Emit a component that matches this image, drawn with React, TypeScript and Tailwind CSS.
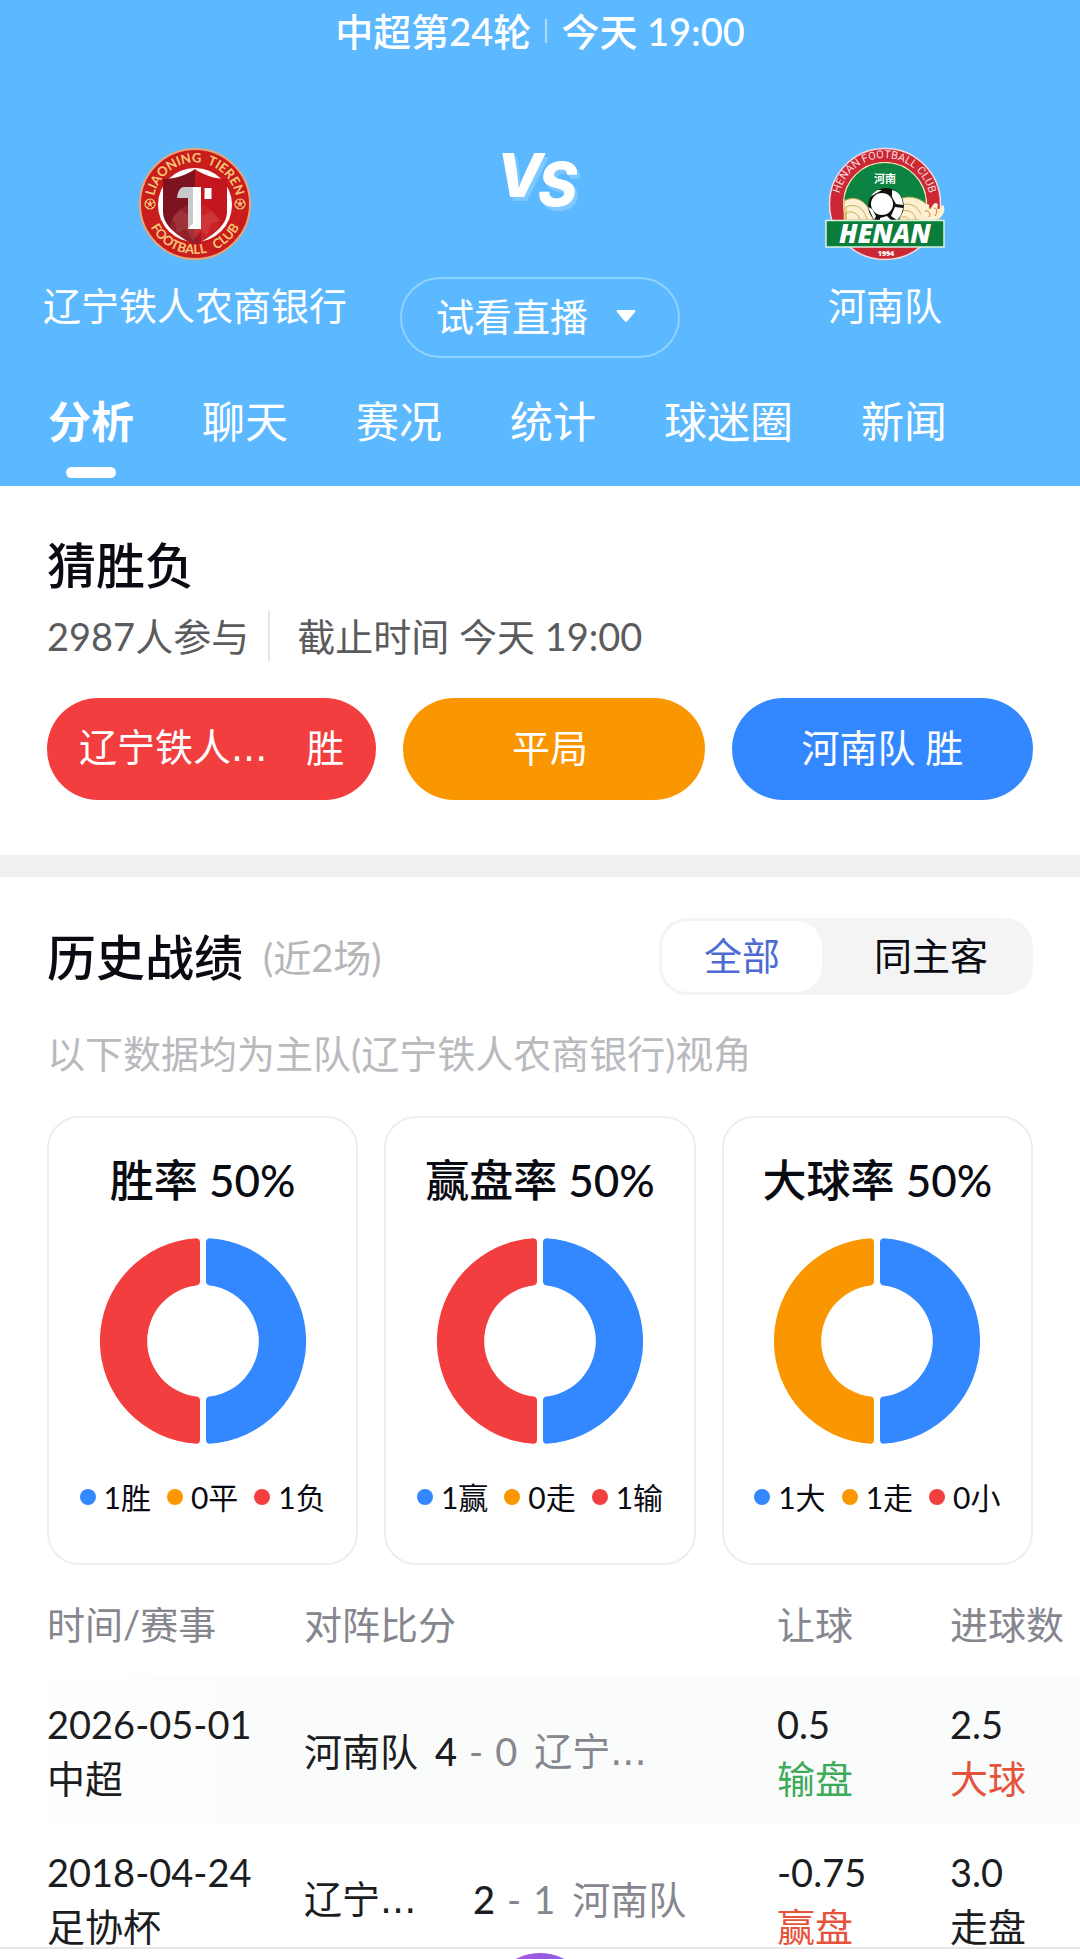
import React, { useState } from "react";

const BLUE = "#3388ff";
const ORANGE = "#fa9600";
const RED = "#f23e3f";

function MiniBall({ x, y }: { x: number; y: number }) {
  return (
    <g transform={`translate(${x} ${y})`}>
      <circle r="5" fill="none" stroke="#f3c57c" strokeWidth="1.2" />
      <circle r="2" fill="#f3c57c" />
      <path d="M0-2V-5M2-1 4.600-2M1.200 2 3 4M-1.200 2-3 4M-2-1-4.600-2" stroke="#f3c57c" strokeWidth="1" />
    </g>
  );
}

function LiaoningCrest() {
  return (
    <svg viewBox="0 0 112 112" className="size-28" role="img" aria-label="辽宁铁人队徽">
      <defs>
        <path id="ln-top" d="M14.500 56a41.500 41.500 0 0 1 83 0" />
        <path id="ln-bottom" d="M6 56a50 50 0 0 0 100 0" />
        <clipPath id="ln-shield">
          <path d="M56 21c8 6 20 10 32 10v33c0 14-16 25-32 33-16-8-32-19-32-33V31c12 0 24-4 32-10Z" />
        </clipPath>
      </defs>
      <circle cx="56" cy="56" r="55" fill="#c91c1d" stroke="#eba575" strokeWidth="2" />
      <circle cx="56" cy="57" r="37" fill="#fff" />
      <g clipPath="url(#ln-shield)">
        <path d="M20 15h36v90H20z" fill="#7d1320" />
        <path d="M56 15h36v90H56z" fill="#c3161f" />
        <circle cx="56" cy="81" r="25" fill="#e25a55" opacity=".2" />
        <path d="M33 70l9-8 7 5 7-6 9 7 7-5 10 10-9 2-5 12-8-6-6 12-7-12-9 4-2-9Z" fill="#f0a09a" opacity=".14" />
        <path d="M56 90 62 84V97H56Z" fill="#7d1320" opacity=".6" />
      </g>
      <path d="M45 39h11v42h-7V50H38c1-7 3-11 7-11Z" fill="#c9c9cd" />
      <path d="M54 39h8v42H49l5-6Z" fill="#fff" />
      <path d="M65.500 40h7v11h-7Z" fill="#fff" />
      <MiniBall x={11} y={56} />
      <MiniBall x={101} y={56} />
      <text fill="#f6c876" fontSize="13" fontWeight="700" className="font-['Lato']">
        <textPath href="#ln-top" startOffset="50%" textAnchor="middle">LIAONING&#160;&#160;TIEREN</textPath>
      </text>
      <text fill="#f6c876" fontSize="13" fontWeight="700" className="font-['Lato']">
        <textPath href="#ln-bottom" startOffset="50%" textAnchor="middle">FOOTBALL&#160;&#160;&#160;CLUB</textPath>
      </text>
    </svg>
  );
}

function HenanCrest() {
  return (
    <svg viewBox="0 0 122 114" className="h-[114px] w-[122px]" role="img" aria-label="河南队徽">
      <defs>
        <path id="hn-top" d="M14.500 57a46 46 0 0 1 92 0" />
        <clipPath id="hn-inner"><path d="M19 15h84v58H19z" /></clipPath>
        <clipPath id="hn-ball"><circle cx="62" cy="59" r="18" /></clipPath>
      </defs>
      <circle cx="61" cy="57" r="55.500" fill="#cb2735" stroke="#f7d9da" strokeWidth="1.500" />
      <g clipPath="url(#hn-inner)">
        <circle cx="61" cy="57" r="41.500" fill="#0c8340" stroke="#f6edc0" strokeWidth="1.200" />
      </g>
      <g fill="#fbf0cf" stroke="#c9a85a" strokeWidth="1">
        <path d="M20 73V54c10-6 24-2 29 19Z" />
        <path d="M76 73V52c12-5 25 1 30 10l-2 11Z" />
        <path d="M22 73V60c9-4 18 0 21 13M22 73v-7c6-3 12 0 14 7M78 58c9-3 18 2 21 15M78 64c7-2 13 2 14 9M78 70c4-1 6 1 7 3" fill="none" />
        <path d="M97 73c0-9 1-15 6-16 4 0 1 4 2 5 2 2 3-6 7-6 4 1 0 5 2 6 3 1 3-6 6-3 2 7-4 14-9 14Z" stroke="none" />
        <path d="M101 64c4-1 6 3 4 6M110 61c4 0 3 5 1 8" fill="none" stroke="#e2762e" />
      </g>
      <g clipPath="url(#hn-ball)">
        <circle cx="62" cy="59" r="18" fill="#111" />
        <circle cx="58" cy="57" r="11" fill="#fff" />
        <path d="M68 43c7 1 11 8 11 15l-7-1-4-7ZM71 60l8 1c-1 6-3 9-6 12l-6-4ZM46 50l5-7 7 0-7 4ZM44 60l4 2 4 7-2 4ZM56 71l7-2 5 5-12 2Z" fill="#fff" />
      </g>
      <path d="M2 73.500h118V100H2z" fill="#0a7d3a" stroke="#d8f3e2" strokeWidth="1.500" />
      <text x="61" y="96" textAnchor="middle" fill="#fff" fontSize="26" fontWeight="800" fontStyle="italic" className="font-['Open_Sans']">HENAN</text>
      <text x="62" y="109" textAnchor="middle" fill="#fff" fontSize="7" fontWeight="800" className="font-['Open_Sans']">1994</text>
      <text x="61" y="36" textAnchor="middle" fill="#fff" fontSize="11" fontWeight="700" className="font-['Noto_Sans_CJK_SC']">河南</text>
      <text fill="#f8dcdc" fontSize="11" className="font-['Roboto']">
        <textPath href="#hn-top" startOffset="50%" textAnchor="middle">HENAN FOOTBALL CLUB</textPath>
      </text>
    </svg>
  );
}

function Versus() {
  return (
    <svg viewBox="0 0 120 80" className="h-20 w-[120px] drop-shadow-[3px_4px_0_#7cc8ff]" role="img" aria-label="VS">
      <text x="57" y="50" textAnchor="middle" fontSize="60" fontStyle="italic" fontWeight="800" fill="#fff" className="font-['Inter']">
        V<tspan dx="-5" dy="9">S</tspan>
      </text>
    </svg>
  );
}

function Donut({ left }: { left: string }) {
  const half = "M6 4A4 4 0 0 1 9.500 .2A103 103 0 0 1 9.500 205.800A4 4 0 0 1 6 202V162A4 4 0 0 1 9.500 158.600A56 56 0 0 0 9.500 47.400A4 4 0 0 1 6 44Z";
  return (
    <svg viewBox="0 0 206 206" className="size-[206px]" aria-hidden="true">
      <path d={half} transform="translate(100 0)" fill={BLUE} />
      <path d={half} transform="translate(106 0) scale(-1 1)" fill={left} />
    </svg>
  );
}

function TeamName({ name, cut }: { name: string; cut?: boolean }) {
  return (
    <span>
      {name}
      {cut && <span className="font-['DejaVu_Sans']">...</span>}
    </span>
  );
}

type Stat = { title: string; left: string; legend: string[] };
const stats: Stat[] = [
  { title: "胜率 50%", left: RED, legend: ["1胜", "0平", "1负"] },
  { title: "赢盘率 50%", left: RED, legend: ["1赢", "0走", "1输"] },
  { title: "大球率 50%", left: ORANGE, legend: ["1大", "1走", "0小"] },
];
const dotColors = [BLUE, ORANGE, RED];

const tabs = ["分析", "聊天", "赛况", "统计", "球迷圈", "新闻"];

type Match = {
  date: string; cup: string; home: string; homeCut?: boolean; hs: string; as: string; away: string; awayCut?: boolean;
  handicap: string; hr: string; hrClass: string; goals: string; gr: string; grClass: string;
};
const matches: Match[] = [
  { date: "2026-05-01", cup: "中超", home: "河南队", hs: "4", as: "0", away: "辽宁", awayCut: true, handicap: "0.5", hr: "输盘", hrClass: "text-[#3daa5c]", goals: "2.5", gr: "大球", grClass: "text-[#e5533d]" },
  { date: "2018-04-24", cup: "足协杯", home: "辽宁", homeCut: true, hs: "2", as: "1", away: "河南队", handicap: "-0.75", hr: "赢盘", hrClass: "text-[#e5533d]", goals: "3.0", gr: "走盘", grClass: "text-[#1c1d21]" },
];

export default function App() {
  const [tab, setTab] = useState(0);
  const [scope, setScope] = useState(0);
  return (
    <div className="flex h-screen flex-col bg-white font-['Lato','Noto_Sans_CJK_SC',sans-serif] text-[38px] leading-[54px] text-[#0a0b12]">
      <div className="min-h-0 flex-1 overflow-x-hidden overflow-y-auto [scrollbar-width:none]">
        <header className="bg-[#5cb9ff] text-white">
          <div className="flex items-center justify-center gap-3.5 pt-1 font-medium">
            <span>中超第24轮</span>
            <span className="h-6 w-0.5 bg-white/50" />
            <span>今天 19:00</span>
          </div>
          <div className="grid grid-cols-[390fr_300fr_390fr] items-start pt-[89px]">
            <div className="flex flex-col items-center gap-[17px]">
              <div className="flex h-[114px] items-center"><LiaoningCrest /></div>
              <span>辽宁铁人农商银行</span>
            </div>
            <div className="flex flex-col items-center gap-[50px]">
              <Versus />
              <button type="button" className="flex h-[81px] w-[280px] items-center justify-center gap-7 rounded-full border-2 border-[#8fd3ff] pr-2 pb-1">
                <span>试看直播</span>
                <svg viewBox="0 0 20 12" className="h-3 w-5" aria-hidden="true"><path d="M2 0H18Q20 0 19 2L11.500 11Q10 12.500 8.500 11L1 2Q0 0 2 0Z" fill="#fff" /></svg>
              </button>
            </div>
            <div className="flex flex-col items-center gap-[17px]">
              <HenanCrest />
              <span>河南队</span>
            </div>
          </div>
          <nav className="mt-[37px] flex gap-[68px] pl-12 text-[43px]">
            {tabs.map((t, i) => (
              <button key={t} type="button" onClick={() => setTab(i)} className={`flex flex-col items-center gap-[18px] pb-2 ${i === tab ? "font-bold" : ""}`}>
                <span>{t}</span>
                {i === tab && <span className="h-[11px] w-[50px] rounded-full bg-white" />}
              </button>
            ))}
          </nav>
        </header>

        <section className="px-[47px] pt-[50px] pb-[55px]">
          <h2 className="text-[49px] leading-[58px] font-medium">猜胜负</h2>
          <div className="mt-[15px] flex items-center text-[#5b5b5d]">
            <span>2987人参与</span>
            <span className="mr-[27px] ml-[19px] h-[50px] w-0.5 bg-[#e4e4e4]" />
            <span>截止时间 今天 19:00</span>
          </div>
          <div className="mt-[35px] grid grid-cols-[329fr_301fr_301fr] gap-[27px] text-white">
            <button type="button" className="flex h-[102px] items-center justify-between rounded-full bg-[#f23e3f] px-8 pb-1"><TeamName name="辽宁铁人" cut /><span>胜</span></button>
            <button type="button" className="h-[102px] rounded-full bg-[#fa9600] pr-2 pb-1">平局</button>
            <button type="button" className="h-[102px] rounded-full bg-[#3388ff] pb-1">河南队 胜</button>
          </div>
        </section>

        <div className="h-[22px] bg-[#f0f0f0]" />

        <section className="pt-[41px]">
          <div className="flex items-center px-[47px]">
            <h2 className="text-[49px] leading-[58px] font-medium">历史战绩</h2>
            <span className="ml-5 text-[#b5b6b9]">(近2场)</span>
            <div className="ml-auto flex h-[77px] rounded-[28px] bg-[#f4f4f4] p-[3px]">
              {["全部", "同主客"].map((s, i) => (
                <button key={s} type="button" aria-pressed={scope === i} onClick={() => setScope(i)}
                  className={`rounded-[26px] pb-1 ${i === 0 ? "px-[42px]" : "pr-[42px] pl-[52px]"} ${scope === i ? "bg-white text-[#4e6bd3]" : ""}`}>
                  {s}
                </button>
              ))}
            </div>
          </div>
          <p className="mt-[31px] px-[47px] text-[#b9babd]">以下数据均为主队(辽宁铁人农商银行)视角</p>
          <div className="mt-9 grid grid-cols-3 gap-[26px] px-[47px]">
            {stats.map((s) => (
              <article key={s.title} className="flex flex-col items-center rounded-[32px] border-2 border-[#eeeeee] pt-[35px] pb-[42px]">
                <h3 className="text-[44px] leading-[54px] font-medium">{s.title}</h3>
                <div className="mt-[31px]"><Donut left={s.left} /></div>
                <ul className="mt-[29px] flex gap-4 text-[30px] leading-[48px]">
                  {s.legend.map((l, i) => (
                    <li key={i} className="flex items-center gap-2">
                      <span className="size-4 rounded-full" style={{ backgroundColor: dotColors[i] }} />
                      {l}
                    </li>
                  ))}
                </ul>
              </article>
            ))}
          </div>

          <table className="mt-2 w-full table-fixed text-left whitespace-nowrap">
            <colgroup>
              <col className="w-[304px]" />
              <col />
              <col className="w-[173px]" />
              <col className="w-[130px]" />
            </colgroup>
            <thead>
              <tr className="h-[104px] text-[#85868e]">
                <th className="pb-0.5 pl-[47px] font-normal">时间/赛事</th>
                <th className="pb-0.5 font-normal">对阵比分</th>
                <th className="pb-0.5 font-normal">让球</th>
                <th className="pb-0.5 font-normal">进球数</th>
              </tr>
            </thead>
            <tbody className="text-[#1c1d21]">
              {matches.map((m, i) => (
                <tr key={m.date} className={`h-[148px] ${i === 0 ? "bg-linear-to-r from-white via-[#fafbfb] via-30% to-[#fafbfb]" : ""}`}>
                  <td className="pl-[47px]"><div>{m.date}</div><div>{m.cup}</div></td>
                  <td>
                    <div className="flex items-center">
                      <span className={m.homeCut ? "w-[152px]" : ""}><TeamName name={m.home} cut={m.homeCut} /></span>
                      <span className="ml-[17px] font-medium">{m.hs}</span>
                      <span className="ml-3 text-[#85868e]">-</span>
                      <span className="ml-3 text-[#85868e]">{m.as}</span>
                      <span className="ml-[17px] text-[#85868e]"><TeamName name={m.away} cut={m.awayCut} /></span>
                    </div>
                  </td>
                  <td><div>{m.handicap}</div><div className={m.hrClass}>{m.hr}</div></td>
                  <td><div>{m.goals}</div><div className={m.grClass}>{m.gr}</div></td>
                </tr>
              ))}
            </tbody>
          </table>
        </section>
      </div>
      <footer className="flex h-3 shrink-0 justify-center overflow-hidden border-t-2 border-[#e6e6e8] bg-white pt-1">
        <button type="button" aria-label="发布" className="size-[104px] shrink-0 rounded-full bg-linear-to-r from-[#b44fdc] to-[#7a63e8]" />
      </footer>
    </div>
  );
}
